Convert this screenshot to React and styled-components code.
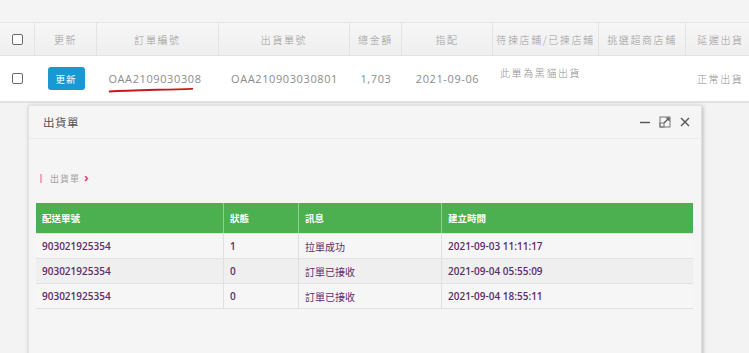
import React from "react";
import styled, { createGlobalStyle } from "styled-components";

const GlobalStyle = createGlobalStyle`
  html, body {
    margin: 0;
    padding: 0;
    background: #f3f3f3;
    font-family: "Open Sans", "Noto Sans CJK TC", sans-serif;
    overflow: hidden;
  }
`;

const columns = [
  { key: "check", title: "", width: 35 },
  { key: "refresh", title: "更新", width: 62 },
  { key: "order", title: "訂單編號", width: 122 },
  { key: "ship", title: "出貨單號", width: 131 },
  { key: "total", title: "總金額", width: 52 },
  { key: "assign", title: "指配", width: 91 },
  { key: "store", title: "待揀店鋪/已揀店鋪", width: 106 },
  { key: "cvs", title: "挑選超商店鋪", width: 87 },
  { key: "delay", title: "延遲出貨", width: 70 },
];

const logs = [
  { no: "903021925354", status: "1", msg: "拉單成功", time: "2021-09-03 11:11:17" },
  { no: "903021925354", status: "0", msg: "訂單已接收", time: "2021-09-04 05:55:09" },
  { no: "903021925354", status: "0", msg: "訂單已接收", time: "2021-09-04 18:55:11" },
];

const App = () => {
  return (
    <Page>
      <GlobalStyle />
      <TopStrip />
      <OrderTable>
        <HeadRow>
          {columns.map((c) => (
            <HeadCell key={c.key} $w={c.width}>
              {c.key === "check" ? <Check /> : c.title}
            </HeadCell>
          ))}
        </HeadRow>
        <DataRow>
          <DataCell $w={35}>
            <Check />
          </DataCell>
          <DataCell $w={62}>
            <RefreshButton>更新</RefreshButton>
          </DataCell>
          <DataCell $w={122}>
            <OrderNo>
              OAA2109030308
              <Scribble viewBox="0 0 90 8" preserveAspectRatio="none">
                <path
                  d="M2 6 C 20 4.5, 50 4, 88 2.5"
                  stroke="#c8191e"
                  strokeWidth="2.6"
                  fill="none"
                  strokeLinecap="round"
                />
              </Scribble>
            </OrderNo>
          </DataCell>
          <DataCell $w={131}>OAA210903030801</DataCell>
          <DataCell $w={52}>1,703</DataCell>
          <DataCell $w={91}>2021-09-06</DataCell>
          <DataCell $w={106} $align="flex-start" $pad="7px" $valign="flex-start">
            <Note>此單為黑貓出貨</Note>
          </DataCell>
          <DataCell $w={87} />
          <DataCell $w={70} $align="flex-start" $pad="11px">
            <Cjk>正常出貨</Cjk>
          </DataCell>
        </DataRow>
      </OrderTable>

      <Modal>
        <ModalHeader>
          <ModalTitle>出貨單</ModalTitle>
          <ModalTools>
            <svg width="12" height="12" viewBox="0 0 12 12">
              <path d="M1 6.5h10" stroke="#555" strokeWidth="1.4" />
            </svg>
            <svg width="12" height="12" viewBox="0 0 12 12">
              <rect x="1" y="1" width="10" height="10" fill="none" stroke="#777" strokeWidth="1" />
              <rect x="1" y="7" width="4" height="4" fill="none" stroke="#777" strokeWidth="1" />
              <path d="M5 7 L10 2 M7 2h3v3" stroke="#555" strokeWidth="1.2" fill="none" />
            </svg>
            <svg width="12" height="12" viewBox="0 0 12 12">
              <path d="M2 2 L10 10 M10 2 L2 10" stroke="#555" strokeWidth="1.4" />
            </svg>
          </ModalTools>
        </ModalHeader>
        <ModalBody>
          <Crumb>
            <CrumbBar />
            <CrumbText>出貨單</CrumbText>
            <CrumbArrow>›</CrumbArrow>
          </Crumb>
          <LogTable>
            <LogHead>
              <LogHeadCell>配送單號</LogHeadCell>
              <LogHeadCell>狀態</LogHeadCell>
              <LogHeadCell>訊息</LogHeadCell>
              <LogHeadCell>建立時間</LogHeadCell>
            </LogHead>
            {logs.map((r, i) => (
              <LogRow key={i} $alt={i === 1}>
                <LogCell>{r.no}</LogCell>
                <LogCell>{r.status}</LogCell>
                <LogCell $cjk>{r.msg}</LogCell>
                <LogCell>{r.time}</LogCell>
              </LogRow>
            ))}
          </LogTable>
        </ModalBody>
      </Modal>
    </Page>
  );
};

export default App;

const Page = styled.div`
  position: relative;
  width: 749px;
  height: 353px;
  overflow: hidden;
  background: #f3f3f3;
`;

const TopStrip = styled.div`
  height: 22px;
  background: #f4f4f4;
  border-bottom: 1px solid #e6e6e6;
`;

const OrderTable = styled.div`
  display: flex;
  flex-direction: column;
  width: 756px;
`;

const HeadRow = styled.div`
  display: flex;
  height: 32px;
  background: linear-gradient(#f6f6f6, #efefef);
  border-bottom: 1px solid #e4e4e4;
`;

const HeadCell = styled.div`
  flex: 0 0 ${({ $w }) => $w}px;
  display: flex;
  align-items: center;
  justify-content: center;
  border-right: 1px solid #e3e3e3;
  box-sizing: border-box;
  font-family: "Noto Sans CJK TC", sans-serif;
  font-size: 10px;
  font-weight: 300;
  letter-spacing: 1.6px;
  color: #9a9a9a;
`;

const DataRow = styled.div`
  display: flex;
  height: 45px;
  background: #ffffff;
  border-bottom: 2px solid #e2e2e2;
`;

const DataCell = styled.div`
  flex: 0 0 ${({ $w }) => $w}px;
  display: flex;
  align-items: ${({ $valign }) => $valign || "center"};
  justify-content: ${({ $align }) => $align || "center"};
  padding-left: ${({ $pad }) => $pad || "0"};
  box-sizing: border-box;
  font-size: 11px;
  color: #8c8c8c;
  font-family: "Open Sans", "Noto Sans CJK TC", sans-serif;
  letter-spacing: 0.6px;
`;

const Cjk = styled.span`
  font-family: "Noto Sans CJK TC", sans-serif;
  font-size: 10px;
  font-weight: 300;
  letter-spacing: 1.6px;
  color: #909090;
`;

const Note = styled(Cjk)`
  margin-top: 9px;
`;

const Check = styled.span`
  display: inline-block;
  width: 9px;
  height: 9px;
  border: 1px solid #6a6a6a;
  border-radius: 2px;
  background: #fff;
`;

const RefreshButton = styled.button`
  width: 37px;
  height: 23px;
  border: none;
  border-radius: 3px;
  background: #1a98d3;
  color: #fff;
  font-family: "Noto Sans CJK TC", sans-serif;
  font-size: 9.5px;
  letter-spacing: 1px;
  padding: 0;
`;

const OrderNo = styled.span`
  position: relative;
  margin-left: -6px;
`;

const Scribble = styled.svg`
  position: absolute;
  left: 0;
  bottom: -7px;
  width: 86px;
  height: 6px;
`;

const Modal = styled.div`
  position: absolute;
  left: 28px;
  top: 105px;
  width: 674px;
  height: 270px;
  background: #f5f5f5;
  border: 1px solid #e2e2e2;
  box-shadow: 1px 1px 4px rgba(0, 0, 0, 0.25);
  box-sizing: border-box;
  display: flex;
  flex-direction: column;
`;

const ModalHeader = styled.div`
  height: 32px;
  display: flex;
  align-items: center;
  justify-content: space-between;
  padding: 0 10px 0 14px;
  border-bottom: 1px solid #eaeaea;
`;

const ModalTitle = styled.span`
  font-family: "Noto Sans CJK TC", sans-serif;
  font-size: 11.5px;
  color: #555;
  letter-spacing: 0.5px;
`;

const ModalTools = styled.div`
  display: flex;
  align-items: center;
  gap: 8px;
`;

const ModalBody = styled.div`
  padding: 32px 8px 0 7px;
  display: flex;
  flex-direction: column;
`;

const Crumb = styled.div`
  display: flex;
  align-items: center;
  height: 14px;
  padding-left: 4px;
  margin-bottom: 18px;
`;

const CrumbBar = styled.span`
  width: 2px;
  height: 9px;
  background: #f2a6c4;
  margin-right: 8px;
`;

const CrumbText = styled.span`
  font-family: "Noto Sans CJK TC", sans-serif;
  font-size: 9px;
  color: #a3a3a3;
  letter-spacing: 1px;
`;

const CrumbArrow = styled.span`
  margin-left: 4px;
  font-size: 13px;
  font-weight: 700;
  line-height: 1;
  color: #e0437f;
  margin-top: -2px;
`;

const logGrid = `
  display: grid;
  grid-template-columns: 187px 75px 143px 1fr;
`;

const LogTable = styled.div`
  width: 657px;
  display: flex;
  flex-direction: column;
  border-bottom: 1px solid #e0e0e0;
`;

const LogHead = styled.div`
  ${logGrid}
  height: 30px;
  background: #4caf50;
`;

const LogHeadCell = styled.div`
  display: flex;
  align-items: center;
  padding-left: 6px;
  border-left: 1px solid #8fd191;
  font-family: "Noto Sans CJK TC", sans-serif;
  font-size: 9.5px;
  font-weight: 700;
  color: #fff;
  &:first-child {
    border-left: none;
  }
`;

const LogRow = styled.div`
  ${logGrid}
  height: 25px;
  background: ${({ $alt }) => ($alt ? "#efefef" : "#f6f6f6")};
  border-top: 1px solid #e2e2e2;
  box-sizing: border-box;
  &:first-of-type {
    border-top: none;
  }
`;

const LogCell = styled.div`
  display: flex;
  align-items: center;
  padding-left: 6px;
  border-left: 1px solid #e0e0e0;
  font-family: ${({ $cjk }) =>
    $cjk ? `"Noto Sans CJK TC", sans-serif` : `"Open Sans", "Noto Sans CJK TC", sans-serif`};
  font-size: 10px;
  font-weight: ${({ $cjk }) => ($cjk ? 400 : 600)};
  color: #5d2d6b;
  &:first-child {
    border-left: none;
  }
`;
